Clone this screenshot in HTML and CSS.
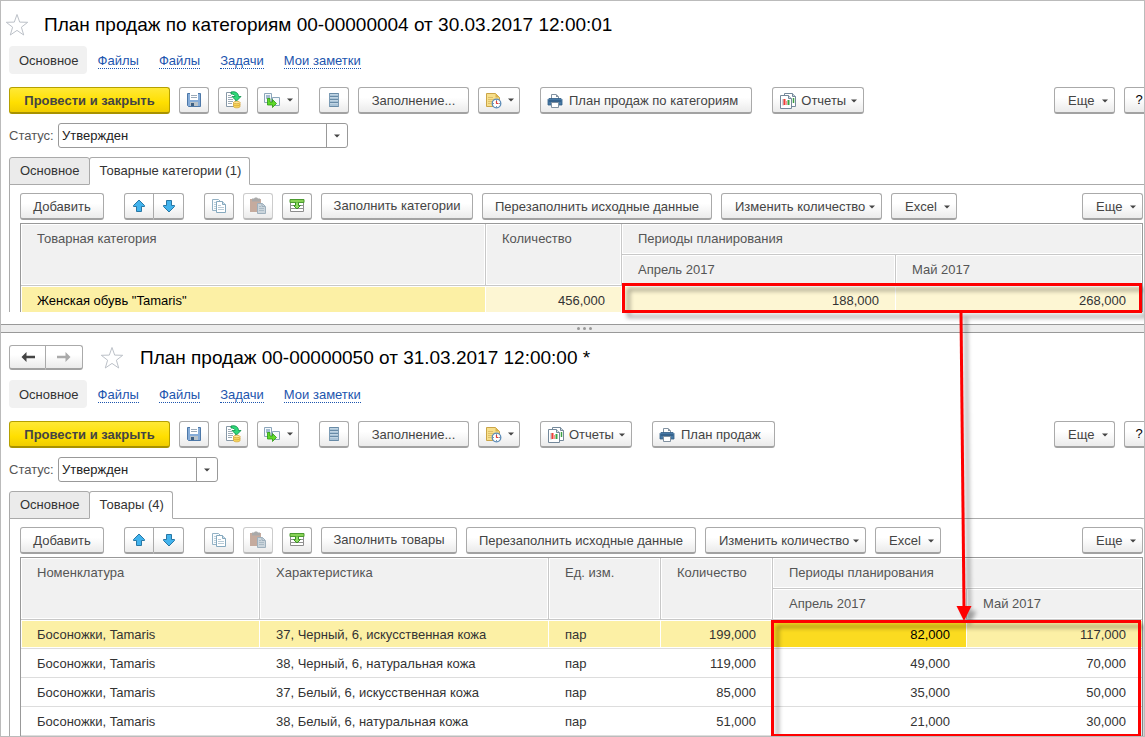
FILE: index.html
```html
<!DOCTYPE html>
<html lang="ru">
<head>
<meta charset="utf-8">
<title>План продаж</title>
<link rel="stylesheet" href="styles.css">
</head>
<body>
<svg class="sprite" aria-hidden="true">
  <symbol id="i-star" viewBox="0 0 24 24"><path d="M12 1.500l2.700 7.600 8 .2-6.300 4.900 2.300 7.800-6.700-4.600-6.700 4.600 2.300-7.800L1.300 9.300l8-.2z" fill="#fff" stroke="#bcc1c8"/></symbol>
  <symbol id="i-save" viewBox="0 0 16 16"><path d="M1.500 1.500h13v13h-12l-1-1z" fill="#85acd8" stroke="#4d78a8"/><path d="M4 1h8v7H4z" fill="#fff"/><path d="M5 3.500h6M5 5.500h6" stroke="#9aa9b8"/><path d="M4 10h8v4H4z" fill="#b9c3ca"/><path d="M5 11h3v3H5z" fill="#3d5f82"/></symbol>
  <symbol id="i-post" viewBox="0 0 18 18"><path d="M2.500 1.500h9v14h-9z" fill="#fff" stroke="#8798a7"/><path d="M4 4.500h3M4 6.500h4M4 8.500h5M4 10.500h5M4 12.500h4" stroke="#9caab5"/><path d="M7 1c4.500-1 7.500 1 7.500 4.500H17L12.500 10 8 5.500h3C11 4 9.500 3 7 3z" fill="#2fd877" stroke="#0a8c48" stroke-width=".8"/><path d="M9.500 11.500v4c0 1.800 6.500 1.800 6.500 0v-4z" fill="#f7d65c" stroke="#d3a234" stroke-width=".7"/><ellipse cx="12.750" cy="11.500" rx="3.250" ry="1.200" fill="#ffe694" stroke="#d3a234" stroke-width=".7"/><path d="M9.500 13.500c0 1.600 6.500 1.600 6.500 0" fill="none" stroke="#d3a234" stroke-width=".7"/></symbol>
  <symbol id="i-based" viewBox="0 0 18 16"><path d="M1.500 1.500h7v9h-7z" fill="#f5f9fc" stroke="#8ca6bb"/><path d="M3 3h4v4H3z" fill="#a3bcd0"/><path d="M9.500 5.500h7v8h-7z" fill="#f5f9fc" stroke="#8ca6bb"/><path d="M4.500 6.500h2.500V10h2.500V7.500l4 4-4 4V13h-5z" fill="#5fd92b" stroke="#2b9811" stroke-width=".8"/></symbol>
  <symbol id="i-list" viewBox="0 0 16 16"><path d="M3 1h10v14H3z" fill="#a9c3d7"/><path d="M3 1.500h10M3 4.500h10M3 7.500h10M3 10.500h10M3 14.500h10" stroke="#688ba7"/><path d="M3 2.500h10M3 5.500h10M3 8.500h10M3 11.500h10" stroke="#c1d5e4"/><path d="M3.500 1v14M12.500 1v14" stroke="#7d9cb5"/></symbol>
  <symbol id="i-task" viewBox="0 0 18 18"><path d="M2.500 2.500h9l4 4v9h-13z" fill="#f7df8b" stroke="#cba548"/><path d="M11.500 2.500v4h4z" fill="#d9b34f"/><path d="M4 6.500h5M4 8.500h6M4 10.500h4M4 12.500h3" stroke="#dec06a"/><circle cx="12.500" cy="12.500" r="4.300" fill="#fff" stroke="#5b8cb9" stroke-width="1.300"/><path d="M12.500 8.800v1M12.500 15.200v1M8.800 12.500h1M15.200 12.500h1" stroke="#587b9a"/><path d="M12.500 12.700V10M12.500 12.500h2" stroke="#df3c35" stroke-width="1.200"/></symbol>
  <symbol id="i-print" viewBox="0 0 16 16"><path d="M4.500 6V1.500h4.500l2.500 2.500v2" fill="#fff" stroke="#8191a0"/><path d="M9 1v3h3z" fill="#8191a0"/><path d="M2 5.500h12l1 1V12H1V6.500z" fill="#4779a5" stroke="#315d86" stroke-width=".8"/><path d="M2 8h12" stroke="#254d74"/><path d="M4.500 9.500h7v5h-7z" fill="#fff" stroke="#8191a0"/></symbol>
  <symbol id="i-report" viewBox="0 0 18 18"><path d="M5.500 1.500h8l3 3v10h-11z" fill="#fff" stroke="#74889a"/><path d="M13.500 1.500v3h3" fill="#c5d1da" stroke="#74889a"/><path d="M14.500 6v5" stroke="#3da144" stroke-width="1.500"/><path d="M1.500 3.500h8l3 3v10h-11z" fill="#fff" stroke="#74889a"/><path d="M9.500 3.500v3h3" fill="#d7e0e6" stroke="#74889a"/><path d="M4 7v6.500" stroke="#9aa9b5"/><path d="M5.500 7v6" stroke="#f13f37" stroke-width="2"/><path d="M7.500 9v4" stroke="#f7968f"/><path d="M9.500 8v5" stroke="#39a447" stroke-width="2"/></symbol>
  <symbol id="i-up" viewBox="0 0 14 14"><path d="M7 1l5.500 5.500v1H9.500V12.500h-5V7.500h-3v-1z" fill="#42b3ed" stroke="#2877a4"/></symbol>
  <symbol id="i-down" viewBox="0 0 14 14"><path d="M7 13l5.500-5.500v-1H9.500V1.500h-5V6.500h-3v1z" fill="#42b3ed" stroke="#2877a4"/></symbol>
  <symbol id="i-copy" viewBox="0 0 16 16"><path d="M1.500 1.500h6l3 3v8h-9z" fill="#f9fcfe" stroke="#94b2c5"/><path d="M3 4.500h3M3 6.500h3M3 8.500h3M3 10.500h3" stroke="#bfd0db"/><path d="M5.500 3.500h6l3 3v8h-9z" fill="#fff" stroke="#86a9be"/><path d="M11.500 3.500v3h3" fill="#cddfe9" stroke="#86a9be"/><path d="M7 7.500h3M7 9.500h6M7 11.500h6" stroke="#b8cbd7"/></symbol>
  <symbol id="i-paste" viewBox="0 0 18 18"><path d="M1 2h11v13H1z" fill="#c5ab9e"/><path d="M3 1.500h2l1-1h2l1 1h2v3H3z" fill="#a9a9a9"/><path d="M8.500 6.500h5l3 3v7h-8z" fill="#cbd5dc" stroke="#9eb0bd"/><path d="M13 6.500v3h3" fill="none" stroke="#9eb0bd"/><path d="M10 9.500h2M10 11.500h5M10 13.500h5" stroke="#aabac5"/></symbol>
  <symbol id="i-fill" viewBox="0 0 16 16"><path d="M1.500 4.500v9h13v-9" fill="#fff" stroke="#8c8c8c"/><path d="M1 7.500h14M1 10.500h14" stroke="#929292"/><path d="M1 1.500h14v3H1z" fill="#87d255" stroke="#4c9b31"/><path d="M6.500 4.500v3H4.500L8 11l3.500-3.500h-2v-3" fill="#8fdd62" stroke="#3b8f28"/></symbol>
  <symbol id="i-back" viewBox="0 0 16 12"><path d="M6.500 1L1.500 6l5 5V7.200H15V4.800H6.500z" fill="#444"/></symbol>
  <symbol id="i-fwd" viewBox="0 0 16 12"><path d="M9.500 1l5 5-5 5V7.200H1V4.800h8.500z" fill="#aaa"/></symbol>
  <symbol id="i-caret" viewBox="0 0 6 4"><path d="M0 .5h6L3 3.500z" fill="#444"/></symbol>
</svg>

<main class="frame">
  <section class="form form-top">
    <header class="title">
      <svg class="star"><use href="#i-star"/></svg>
      <h1>План продаж по категориям 00-00000004 от 30.03.2017 12:00:01</h1>
    </header>
    <nav class="links">
      <span class="current">Основное</span>
      <a href="#">Файлы</a><a href="#">Файлы</a><a href="#">Задачи</a><a href="#">Мои заметки</a>
    </nav>
    <div class="bar commands">
      <button class="btn primary">Провести и закрыть</button>
      <button class="btn icon" aria-label="Записать"><svg class="i16"><use href="#i-save"/></svg></button>
      <button class="btn icon" aria-label="Провести"><svg class="i18"><use href="#i-post"/></svg></button>
      <button class="btn icon drop" aria-label="Создать на основании"><svg class="based"><use href="#i-based"/></svg><svg class="caret"><use href="#i-caret"/></svg></button>
      <button class="btn icon apart" aria-label="Список"><svg class="i16"><use href="#i-list"/></svg></button>
      <button class="btn filling">Заполнение...</button>
      <button class="btn icon drop" aria-label="Задача"><svg class="i18"><use href="#i-task"/></svg><svg class="caret"><use href="#i-caret"/></svg></button>
      <button class="btn with-icon apart"><svg class="i16"><use href="#i-print"/></svg>План продаж по категориям</button>
      <button class="btn with-icon has-caret reports apart"><svg class="i18"><use href="#i-report"/></svg>Отчеты<svg class="caret"><use href="#i-caret"/></svg></button>
      <button class="btn has-caret more">Еще<svg class="caret"><use href="#i-caret"/></svg></button>
      <button class="btn icon help">?</button>
    </div>
    <div class="status">
      <label for="status-a">Статус:</label>
      <span class="select wide"><select id="status-a"><option>Утвержден</option></select><svg class="caret"><use href="#i-caret"/></svg></span>
    </div>
    <div class="tabs" role="tablist">
      <button class="tab" role="tab">Основное</button>
      <button class="tab active" role="tab" aria-selected="true">Товарные категории (1)</button>
    </div>
    <div class="panel">
      <div class="bar">
        <button class="btn add">Добавить</button>
        <span class="pair apart"><button class="btn icon" aria-label="Вверх"><svg class="i14"><use href="#i-up"/></svg></button><button class="btn icon" aria-label="Вниз"><svg class="i14"><use href="#i-down"/></svg></button></span>
        <button class="btn icon apart" aria-label="Копировать"><svg class="i16"><use href="#i-copy"/></svg></button>
        <button class="btn icon" aria-label="Вставить" disabled><svg class="i18"><use href="#i-paste"/></svg></button>
        <button class="btn icon" aria-label="Заполнить"><svg class="i16"><use href="#i-fill"/></svg></button>
        <button class="btn fill-categories">Заполнить категории</button>
        <button class="btn refill">Перезаполнить исходные данные</button>
        <button class="btn has-caret quantity">Изменить количество<svg class="caret"><use href="#i-caret"/></svg></button>
        <button class="btn has-caret excel">Excel<svg class="caret"><use href="#i-caret"/></svg></button>
        <button class="btn has-caret more">Еще<svg class="caret"><use href="#i-caret"/></svg></button>
      </div>
      <table class="grid categories">
        <colgroup><col><col class="w-qty"><col class="w-april"><col class="w-may"></colgroup>
        <thead>
          <tr><th rowspan="2">Товарная категория</th><th rowspan="2">Количество</th><th colspan="2">Периоды планирования</th></tr>
          <tr><th class="sub">Апрель 2017</th><th class="sub">Май 2017</th></tr>
        </thead>
        <tbody>
          <tr class="current-row"><td>Женская обувь "Tamaris"</td><td class="num">456,000</td><td class="num">188,000</td><td class="num">268,000</td></tr>
        </tbody>
      </table>
    </div>
  </section>

  <div class="splitter"><i></i><i></i><i></i></div>

  <section class="form form-bottom">
    <header class="title">
      <span class="pair history"><button class="btn" aria-label="Назад"><svg><use href="#i-back"/></svg></button><button class="btn" aria-label="Вперед"><svg><use href="#i-fwd"/></svg></button></span>
      <svg class="star"><use href="#i-star"/></svg>
      <h1>План продаж 00-00000050 от 31.03.2017 12:00:00 *</h1>
    </header>
    <nav class="links">
      <span class="current">Основное</span>
      <a href="#">Файлы</a><a href="#">Файлы</a><a href="#">Задачи</a><a href="#">Мои заметки</a>
    </nav>
    <div class="bar commands">
      <button class="btn primary">Провести и закрыть</button>
      <button class="btn icon" aria-label="Записать"><svg class="i16"><use href="#i-save"/></svg></button>
      <button class="btn icon" aria-label="Провести"><svg class="i18"><use href="#i-post"/></svg></button>
      <button class="btn icon drop" aria-label="Создать на основании"><svg class="based"><use href="#i-based"/></svg><svg class="caret"><use href="#i-caret"/></svg></button>
      <button class="btn icon apart" aria-label="Список"><svg class="i16"><use href="#i-list"/></svg></button>
      <button class="btn filling">Заполнение...</button>
      <button class="btn icon drop" aria-label="Задача"><svg class="i18"><use href="#i-task"/></svg><svg class="caret"><use href="#i-caret"/></svg></button>
      <button class="btn with-icon has-caret reports apart"><svg class="i18"><use href="#i-report"/></svg>Отчеты<svg class="caret"><use href="#i-caret"/></svg></button>
      <button class="btn with-icon apart"><svg class="i16"><use href="#i-print"/></svg>План продаж</button>
      <button class="btn has-caret more">Еще<svg class="caret"><use href="#i-caret"/></svg></button>
      <button class="btn icon help">?</button>
    </div>
    <div class="status">
      <label for="status-b">Статус:</label>
      <span class="select"><select id="status-b"><option>Утвержден</option></select><svg class="caret"><use href="#i-caret"/></svg></span>
    </div>
    <div class="tabs" role="tablist">
      <button class="tab" role="tab">Основное</button>
      <button class="tab active" role="tab" aria-selected="true">Товары (4)</button>
    </div>
    <div class="panel">
      <div class="bar">
        <button class="btn add">Добавить</button>
        <span class="pair apart"><button class="btn icon" aria-label="Вверх"><svg class="i14"><use href="#i-up"/></svg></button><button class="btn icon" aria-label="Вниз"><svg class="i14"><use href="#i-down"/></svg></button></span>
        <button class="btn icon apart" aria-label="Копировать"><svg class="i16"><use href="#i-copy"/></svg></button>
        <button class="btn icon" aria-label="Вставить" disabled><svg class="i18"><use href="#i-paste"/></svg></button>
        <button class="btn icon" aria-label="Заполнить"><svg class="i16"><use href="#i-fill"/></svg></button>
        <button class="btn fill-goods">Заполнить товары</button>
        <button class="btn refill">Перезаполнить исходные данные</button>
        <button class="btn has-caret quantity">Изменить количество<svg class="caret"><use href="#i-caret"/></svg></button>
        <button class="btn has-caret excel">Excel<svg class="caret"><use href="#i-caret"/></svg></button>
        <button class="btn has-caret more">Еще<svg class="caret"><use href="#i-caret"/></svg></button>
      </div>
      <table class="grid goods">
        <colgroup><col><col class="w-spec"><col class="w-unit"><col class="w-qty"><col class="w-april"><col class="w-may"></colgroup>
        <thead>
          <tr><th rowspan="2">Номенклатура</th><th rowspan="2">Характеристика</th><th rowspan="2">Ед. изм.</th><th rowspan="2">Количество</th><th colspan="2">Периоды планирования</th></tr>
          <tr><th class="sub">Апрель 2017</th><th class="sub">Май 2017</th></tr>
        </thead>
        <tbody>
          <tr class="selected"><td>Босоножки, Tamaris</td><td>37, Черный, 6, искусственная кожа</td><td>пар</td><td class="num">199,000</td><td class="num focus">82,000</td><td class="num">117,000</td></tr>
          <tr><td>Босоножки, Tamaris</td><td>38, Черный, 6, натуральная кожа</td><td>пар</td><td class="num">119,000</td><td class="num">49,000</td><td class="num">70,000</td></tr>
          <tr><td>Босоножки, Tamaris</td><td>37, Белый, 6, искусственная кожа</td><td>пар</td><td class="num">85,000</td><td class="num">35,000</td><td class="num">50,000</td></tr>
          <tr><td>Босоножки, Tamaris</td><td>38, Белый, 6, натуральная кожа</td><td>пар</td><td class="num">51,000</td><td class="num">21,000</td><td class="num">30,000</td></tr>
        </tbody>
      </table>
    </div>
  </section>

  <div class="mark mark-top"></div>
  <svg class="arrow" viewBox="0 0 16 308" aria-hidden="true">
    <path d="M5 0L8 294" stroke="#fe0000" stroke-width="3"/>
    <path d="M.5 293h15L8 308z" fill="#fe0000"/>
  </svg>
  <div class="mark mark-bottom"></div>
</main>
</body>
</html>
```

FILE: styles.css
```css
* { box-sizing: border-box; }

body {
  margin: 0;
  background: #fff;
  color: #333;
  font: 13px/16px "Liberation Sans", Arial, sans-serif;
}

button, select {
  font: inherit;
  color: inherit;
}

svg { display: block; flex: none; }

.sprite { position: absolute; width: 0; height: 0; }

.frame {
  position: relative;
  min-height: 100vh;
  border: 1px solid #bbb;
  overflow: hidden;
}

.form { padding-left: 8px; }
.form-top { padding-bottom: 12px; }

/* Title row */
.title {
  display: flex;
  align-items: center;
  height: 45px;
  padding-top: 2px;
}
.form-top .title { margin-left: -4px; }
.form-bottom .title { height: 47px; }
.title .star { width: 24px; height: 24px; margin-right: 15px; }
.title h1 {
  margin: 0;
  color: #000;
  font-size: 19px;
  line-height: 24px;
  font-weight: normal;
  white-space: nowrap;
}
.history { margin-right: 17px; }
.history .btn { width: 37px; height: 25px; padding: 0; }
.history svg { width: 16px; height: 12px; }
.form-bottom .star { margin-right: 16px; }

/* Section links */
.links {
  display: flex;
  align-items: center;
  height: 28px;
  gap: 20px;
}
.links .current {
  padding: 7px 8px 5px 10px;
  margin-right: -9px;
  border-radius: 4px;
  background: #f1f1f1;
}
.links a {
  margin-top: 2px;
  color: #1c55ae;
  line-height: 15px;
  text-decoration: none;
  border-bottom: 1px dotted #1c55ae;
}

/* Command bars */
.bar { display: flex; gap: 9px; }
.commands { margin: 13px -10px 0 0; }

.btn {
  display: flex;
  flex: none;
  align-items: center;
  justify-content: center;
  height: 27px;
  padding: 1px 13px 0;
  border: 1px solid #aaa;
  border-bottom: 2px solid #a2a2a2;
  border-radius: 3px;
  background: linear-gradient(#fff 40%, #ebebeb);
  color: #444;
  white-space: nowrap;
}
.btn.primary {
  width: 161px;
  border-color: #b5a000;
  border-bottom-color: #a89200;
  background: linear-gradient(#ffe936, #ffdf00 60%, #f0cd00);
  font-weight: bold;
}
.btn.icon { width: 30px; padding: 0; }
.btn.drop { width: 42px; gap: 6px; }
.btn.with-icon { gap: 6px; padding-left: 6px; }
.btn.has-caret { padding-right: 6px; justify-content: flex-start; }
.has-caret .caret { margin-left: auto; }
.btn.help { color: #000; }
.btn:disabled { border-color: #ccc; border-bottom-color: #bbb; }
.btn.apart, .apart { margin-left: 11px; }

.btn.add { width: 84px; }
.btn.filling { width: 111px; }
.btn.reports { width: 92px; gap: 4px; }
.btn.fill-categories { width: 152px; padding: 0; }
.btn.fill-goods { width: 136px; padding: 0; }
.btn.refill { width: 230px; }
.btn.quantity { width: 161px; }
.btn.excel { width: 66px; }
.btn.more { width: 61px; margin-left: auto; }

.pair { display: flex; }
.pair .btn:first-child { border-radius: 3px 0 0 3px; }
.pair .btn + .btn { border-left: 0; border-radius: 0 3px 3px 0; }

.i14 { width: 14px; height: 14px; }
.i16 { width: 16px; height: 16px; }
.i18 { width: 18px; height: 18px; }
.based { width: 18px; height: 16px; }
.caret { width: 6px; height: 4px; }

/* Status field */
.status {
  display: flex;
  align-items: center;
  gap: 5px;
  margin: 9px 0;
  color: #555;
}
.status label { width: 44px; white-space: nowrap; }
.select { position: relative; width: 160px; height: 25px; }
.select.wide { width: 290px; }
.select select {
  width: 100%;
  height: 25px;
  padding: 0 24px 0 3px;
  border: 1px solid #999;
  border-radius: 3px;
  background: linear-gradient(#999, #999) right 20px top / 1px 100% no-repeat #fff;
  color: #222;
  appearance: none;
}
.select .caret { position: absolute; right: 8px; top: 11px; pointer-events: none; }

/* Tabs */
.tabs { display: flex; position: relative; z-index: 1; margin-bottom: -1px; }
.tab {
  height: 28px;
  padding: 0 9px 0 10px;
  border: 1px solid #aaa;
  border-radius: 3px 3px 0 0;
  background: #ebebeb;
  color: #333;
}
.tab.active {
  margin-left: -1px;
  padding: 0 8px 0 10px;
  border-bottom-color: #fff;
  background: #fff;
}

.panel {
  padding: 8px 1px 0 10px;
  border: solid #aaa;
  border-width: 1px 0 0 1px;
}

/* Data grids */
.grid {
  width: 100%;
  margin-top: 3px;
  border: solid #999;
  border-width: 1px 1px 0;
  border-spacing: 0;
  table-layout: fixed;
}
.grid th {
  height: 31px;
  padding: 7px 16px;
  border-bottom: 1px solid #c8c8c8;
  background: #f1f1f1;
  box-shadow: inset 0 0 0 1px #fff;
  color: #555;
  font-weight: normal;
  text-align: left;
  vertical-align: top;
}
.grid th + th, .grid th.sub { border-left: 1px solid #c8c8c8; }
.grid td {
  height: 29px;
  padding: 2px 16px 0;
  border-bottom: 1px solid #ddd;
  white-space: nowrap;
}
.grid .num { text-align: right; }
.goods td + td { padding-left: 17px; }

.categories .w-qty { width: 136px; }
.categories .w-april { width: 274px; }
.categories .w-may { width: 247px; }
.categories td { height: 26px; padding-top: 4px; border-bottom: 0; }

.goods .w-spec { width: 289px; }
.goods .w-unit, .goods .w-qty { width: 112px; }
.goods .w-april { width: 194px; }
.goods .w-may { width: 176px; }

.current-row td { background: #fdf6d3; box-shadow: inset 1px 1px #fff; }
.current-row td:first-child { background: #fcf0a5; color: #000; }
.selected td { background: #fcf0a5; box-shadow: inset 1px 1px #fff, inset 0 -1px #fff; }
.selected td.focus { background: #fbdb20; color: #000; }

.splitter {
  display: flex;
  align-items: center;
  justify-content: center;
  gap: 3px;
  height: 9px;
  padding-left: 24px;
  border: solid #999;
  border-width: 1px 0;
  background: #ededed;
}
.splitter i { width: 3px; height: 3px; border-radius: 50%; background: #999; }

/* Annotations lying over both forms */
.mark, .arrow {
  position: absolute;
  pointer-events: none;
  filter: drop-shadow(5px 5px 2px rgba(0, 0, 0, .35));
}
.mark { border: 3px solid #fe0000; }
.mark-top { right: 2px; top: 282px; width: 520px; height: 30px; }
.mark-bottom { right: 3px; top: 619px; width: 370px; height: 117px; }
.arrow { right: 172px; top: 312px; width: 16px; height: 308px; }
```
